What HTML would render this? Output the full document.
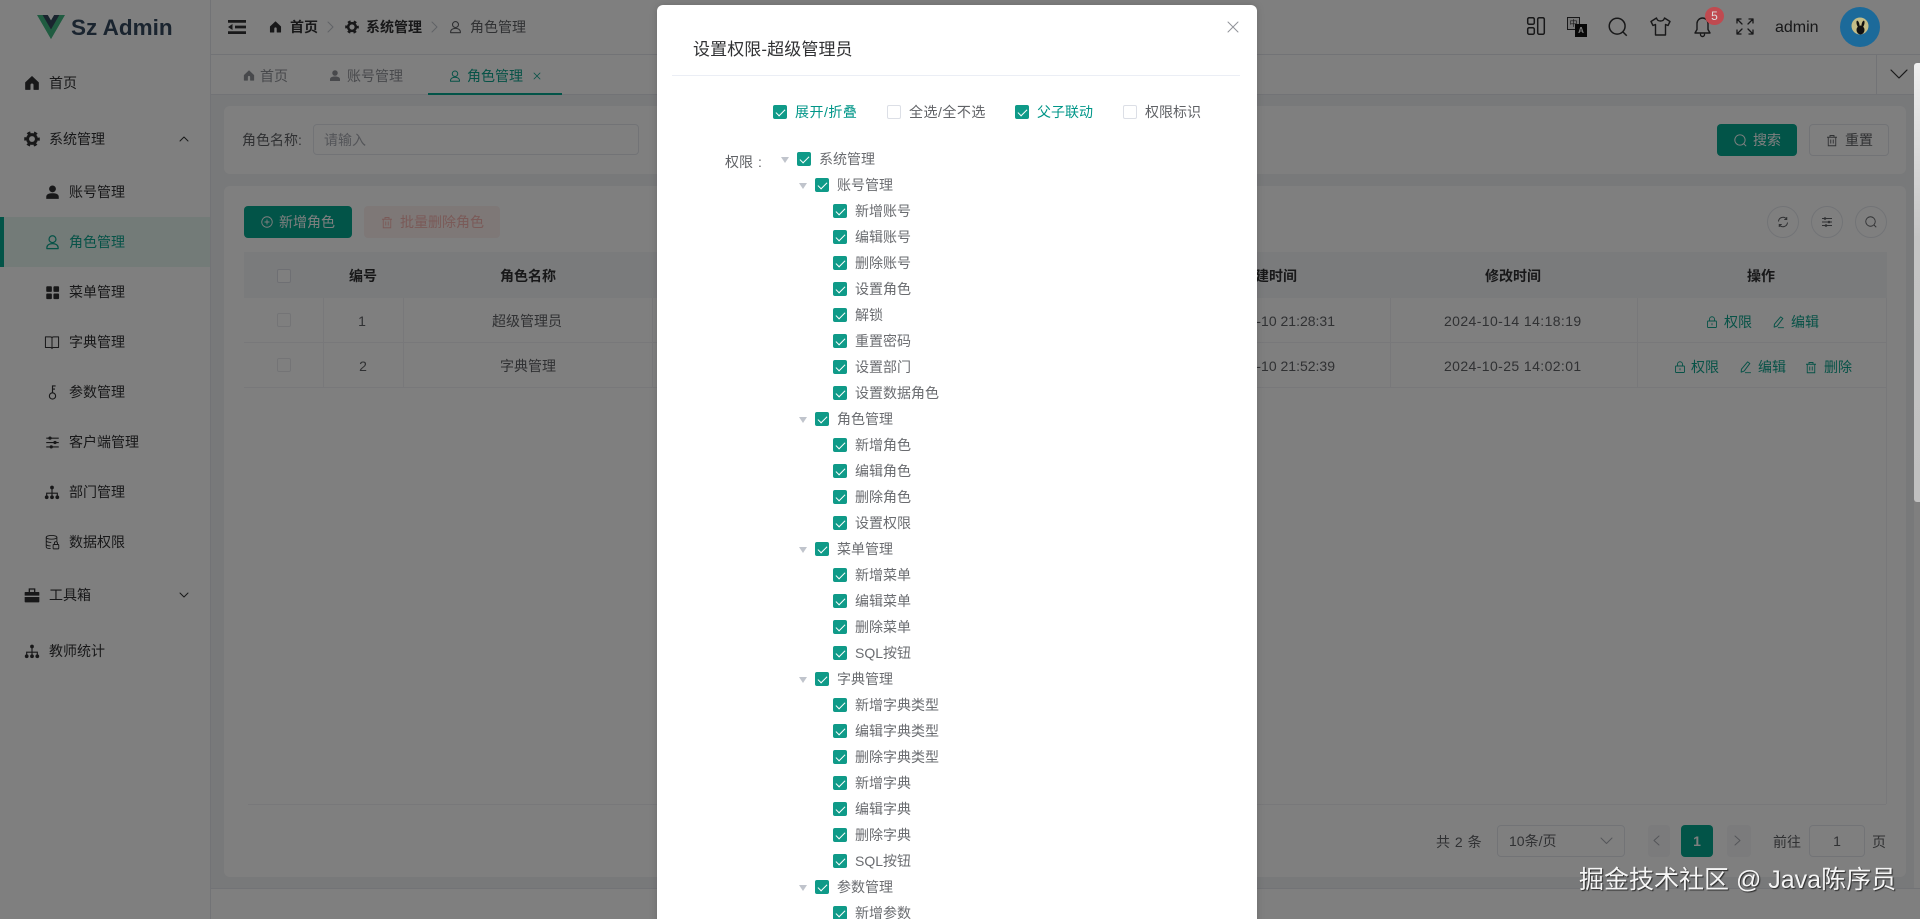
<!DOCTYPE html>
<html lang="zh-CN">
<head>
<meta charset="utf-8">
<title>Sz Admin</title>
<style>
*{box-sizing:border-box}
html,body{margin:0;padding:0;width:1920px;height:919px;overflow:hidden;background:#fff}
body{position:relative;font-family:"Liberation Sans","Noto Sans CJK SC",sans-serif;font-size:14px;color:#303133}
.a{position:absolute}
.t{position:absolute;white-space:nowrap;line-height:20px;height:20px}
.c{text-align:center;transform:translateX(-50%)}
svg.i{position:absolute;fill:none;stroke:currentColor;stroke-width:2;stroke-linecap:round;stroke-linejoin:round;overflow:visible}
.box{position:absolute;width:14px;height:14px;border:1px solid #dcdfe6;border-radius:2px;background:#fff}
.cb{position:absolute;width:14px;height:14px;border-radius:2px;background:#0f9a88}
.cb::after{content:"";position:absolute;left:5px;top:2px;width:4px;height:8px;border:solid #fff;border-width:0 1.4px 1.4px 0;transform:rotate(45deg)}
.g{color:#606266}
.teal{color:#0ea48e}
.btn{position:absolute;border-radius:4px}
.ln{position:absolute;background:#f0f1f5}
.r{position:relative;height:26px;line-height:26px;color:#6a6c70;white-space:nowrap}
.r .cb{top:6px}
.r span{position:absolute;top:0}
.r i{position:absolute;top:11px;width:0;height:0;border-left:4.5px solid transparent;border-right:4.5px solid transparent;border-top:6px solid #c0c4cc}
.l1 i{left:781px}.l1 .cb{left:797px}.l1 span{left:819px}
.l2 i{left:799px}.l2 .cb{left:815px}.l2 span{left:837px}
.l3 .cb{left:833px}.l3 span{left:855px}
</style>
</head>
<body>
<svg width="0" height="0" style="position:absolute">
<symbol id="home" viewBox="0 0 24 24"><path fill="currentColor" stroke="currentColor" stroke-width="1.5" stroke-linejoin="round" d="M12 2.500 2.500 11.500v10h6.500v-6.500a3 3 0 0 1 6 0v6.500h6.500v-10z"/></symbol>
<symbol id="gear" viewBox="0 0 24 24"><circle cx="12" cy="12" r="6.600" fill="none" stroke="currentColor" stroke-width="4.400"/><circle cx="12" cy="12" r="10" fill="none" stroke="currentColor" stroke-width="3.400" stroke-dasharray="5 5.470" stroke-dashoffset="2.500"/></symbol>
<symbol id="userf" viewBox="0 0 24 24"><circle cx="12" cy="7" r="5.500" fill="currentColor"/><path fill="currentColor" d="M2 23v-3.500C2 15.500 6.500 14 12 14s10 1.500 10 5.500V23z"/></symbol>
<symbol id="usero" viewBox="0 0 24 24"><circle cx="12" cy="7.500" r="5.500" fill="none" stroke="currentColor" stroke-width="2"/><path fill="none" stroke="currentColor" stroke-width="2" stroke-linejoin="round" d="M3 22.500v-1.500c0-4 4-6.500 9-6.500s9 2.500 9 6.500v1.500z"/></symbol>
<symbol id="grid" viewBox="0 0 24 24"><rect x="2" y="2" width="9" height="9" rx="1.500" fill="currentColor"/><rect x="13.500" y="2" width="9" height="9" rx="1.500" fill="currentColor"/><rect x="2" y="13.500" width="9" height="9" rx="1.500" fill="currentColor"/><rect x="13.500" y="13.500" width="9" height="9" rx="1.500" fill="currentColor"/></symbol>
<symbol id="book" viewBox="0 0 24 24"><path fill="none" stroke="currentColor" stroke-width="1.600" stroke-linejoin="round" d="M1.500 3h8c1.500 0 2.500.8 2.500 2 0-1.200 1-2 2.500-2h8v17h-8c-1.500 0-2.500.8-2.500 1.800 0-1-1-1.800-2.500-1.800h-8zM12 5v16.800"/></symbol>
<symbol id="key" viewBox="0 0 24 24"><circle cx="12" cy="17.500" r="5" fill="none" stroke="currentColor" stroke-width="1.800"/><path fill="none" stroke="currentColor" stroke-width="1.800" d="M12 12.500V1.500h5M12 6.500h4"/></symbol>
<symbol id="slide" viewBox="0 0 24 24"><path fill="none" stroke="currentColor" stroke-width="1.800" d="M2 5h20M2 12h20M2 19h20"/><circle cx="8" cy="5" r="2.600" fill="currentColor"/><circle cx="16" cy="12" r="2.600" fill="currentColor"/><circle cx="10" cy="19" r="2.600" fill="currentColor"/></symbol>
<symbol id="org" viewBox="0 0 24 24"><circle cx="12" cy="4" r="3" fill="currentColor"/><circle cx="3.500" cy="19.500" r="3" fill="currentColor"/><circle cx="12" cy="19.500" r="3" fill="currentColor"/><circle cx="20.500" cy="19.500" r="3" fill="currentColor"/><path fill="none" stroke="currentColor" stroke-width="1.800" d="M12 6v13M3.500 18v-5h17v5"/></symbol>
<symbol id="data" viewBox="0 0 24 24"><ellipse cx="10.500" cy="4.500" rx="8.500" ry="3" fill="none" stroke="currentColor" stroke-width="1.500"/><path fill="none" stroke="currentColor" stroke-width="1.500" d="M2 4.500V20c0 1.500 3 2.500 7 2.500M19 4.500V11M2 10c0 1.500 3.500 2.800 8 2.800M2 15.500c0 1.500 3 2.800 7 2.800"/><rect x="13" y="16" width="9" height="7" rx="1" fill="none" stroke="currentColor" stroke-width="1.500"/><path fill="none" stroke="currentColor" stroke-width="1.500" d="M15 16v-2a2.500 2.500 0 0 1 5 0v2"/></symbol>
<symbol id="case" viewBox="0 0 24 24"><path fill="currentColor" d="M2 7.500h20a1 1 0 0 1 1 1V13H1V8.500a1 1 0 0 1 1-1zM1 15h22v7a1 1 0 0 1-1 1H2a1 1 0 0 1-1-1z"/><path fill="none" stroke="currentColor" stroke-width="2" d="M8 7.500V3h8v4.500"/></symbol>
<symbol id="lock" viewBox="0 0 24 24"><rect x="3" y="10" width="18" height="13" rx="1.500" fill="none" stroke="currentColor" stroke-width="1.800"/><path fill="none" stroke="currentColor" stroke-width="1.800" d="M7 10V6.500a5 5 0 0 1 10 0V10M12 14.500v4"/></symbol>
<symbol id="edit" viewBox="0 0 24 24"><path fill="none" stroke="currentColor" stroke-width="1.800" stroke-linejoin="round" d="M16 2.500l4 3L9.500 19.500 4 21.500l.5-5.500zM11 22.500h11"/></symbol>
<symbol id="trash" viewBox="0 0 24 24"><path fill="none" stroke="currentColor" stroke-width="1.800" d="M2 5.500h20M8 5.500V2h8v3.500M4.500 5.500V22.500h15V5.500M9.500 10v8M14.500 10v8"/></symbol>
<symbol id="srch" viewBox="0 0 24 24"><circle cx="11" cy="11" r="9.500" fill="none" stroke="currentColor" stroke-width="1.800"/><path fill="none" stroke="currentColor" stroke-width="1.800" d="M18 18l4.500 4.500"/></symbol>
<symbol id="plus" viewBox="0 0 24 24"><circle cx="12" cy="12" r="10.500" fill="none" stroke="currentColor" stroke-width="1.800"/><path fill="none" stroke="currentColor" stroke-width="1.800" d="M12 7v10M7 12h10"/></symbol>
<symbol id="ref" viewBox="0 0 24 24"><path fill="none" stroke="currentColor" stroke-width="2" d="M3 11a9 9 0 0 1 16-5M21 13a9 9 0 0 1-16 5M19.500 2v5h-5M4.500 22v-5h5"/></symbol>
</svg>

<!-- sidebar -->
<div class="a" style="left:0;top:0;width:211px;height:919px;background:#fff;border-right:1px solid #e4e7ed"></div>
<svg class="a" style="left:37px;top:15px" width="28" height="24" viewBox="0 0 256 221"><path fill="#41b883" d="M204.800 0H256L128 220.800 0 0h97.920L128 51.200 157.440 0h47.360Z"/><path fill="#41b883" d="M0 0l128 220.800L256 0h-51.200L128 132.480 50.560 0H0z"/><path fill="#35495e" d="M50.560 0L128 133.120 204.800 0h-47.360L128 51.200 97.920 0H50.560z"/></svg>
<div class="t" style="left:71px;top:15px;font-size:22.500px;font-weight:700;line-height:25px;height:25px;color:#35495e">Sz Admin</div>

<div class="a" style="left:0;top:217px;width:210px;height:50px;background:#e6f7f1"></div>
<div class="a" style="left:0;top:217px;width:4px;height:50px;background:#04a890"></div>

<svg class="a" style="left:24px;top:75px;color:#303133" width="16" height="16"><use href="#home"/></svg><div class="t" style="left:49px;top:73px">首页</div>
<svg class="a" style="left:24px;top:131px;color:#303133" width="16" height="16"><use href="#gear"/></svg><div class="t" style="left:49px;top:129px">系统管理</div>
<svg class="i" style="left:180px;top:136px" width="8" height="5" viewBox="0 0 8 5"><path stroke-width="1" d="M0 5l4-4 4 4"/></svg>
<svg class="a" style="left:45px;top:184px;color:#303133" width="15" height="16"><use href="#userf"/></svg><div class="t" style="left:69px;top:182px">账号管理</div>
<svg class="a teal" style="left:45px;top:234px" width="15" height="16"><use href="#usero"/></svg><div class="t teal" style="left:69px;top:232px">角色管理</div>
<svg class="a" style="left:45px;top:285px;color:#303133" width="15" height="15"><use href="#grid"/></svg><div class="t" style="left:69px;top:282px">菜单管理</div>
<svg class="a" style="left:44px;top:335px;color:#303133" width="16" height="15"><use href="#book"/></svg><div class="t" style="left:69px;top:332px">字典管理</div>
<svg class="a" style="left:45px;top:384px;color:#303133" width="15" height="17"><use href="#key"/></svg><div class="t" style="left:69px;top:382px">参数管理</div>
<svg class="a" style="left:45px;top:435px;color:#303133" width="15" height="15"><use href="#slide"/></svg><div class="t" style="left:69px;top:432px">客户端管理</div>
<svg class="a" style="left:44px;top:485px;color:#303133" width="16" height="15"><use href="#org"/></svg><div class="t" style="left:69px;top:482px">部门管理</div>
<svg class="a" style="left:45px;top:534px;color:#303133" width="15" height="16"><use href="#data"/></svg><div class="t" style="left:69px;top:532px">数据权限</div>
<svg class="a" style="left:24px;top:587px;color:#303133" width="16" height="16"><use href="#case"/></svg><div class="t" style="left:49px;top:585px">工具箱</div>
<svg class="i" style="left:180px;top:593px" width="8" height="5" viewBox="0 0 8 5"><path stroke-width="1" d="M0 0l4 4 4-4"/></svg>
<svg class="a" style="left:24px;top:644px;color:#303133" width="16" height="15"><use href="#org"/></svg><div class="t" style="left:49px;top:641px">教师统计</div>

<!-- header -->
<div class="ln" style="left:211px;top:54px;width:1709px;height:1px;background:#e4e7ed"></div>
<svg class="a" style="left:228px;top:20px;color:#303133" width="18" height="14" viewBox="0 0 18 14"><path fill="currentColor" d="M0 0h18v2.800H0zM7 5.600h11v2.800H7zM0 11.200h18V14H0zM4.500 4v6L0 7z"/></svg>
<svg class="a" style="left:269px;top:20px;color:#303133" width="13" height="14"><use href="#home"/></svg><div class="t" style="left:290px;top:17px;font-weight:700">首页</div>
<svg class="i" style="left:328px;top:22px;color:#c0c4cc" width="6" height="10" viewBox="0 0 6 10"><path stroke-width="1" d="M0 0l5 5-5 5"/></svg>
<svg class="a" style="left:345px;top:20px;color:#303133" width="14" height="14"><use href="#gear"/></svg><div class="t" style="left:366px;top:17px;font-weight:700">系统管理</div>
<svg class="i" style="left:432px;top:22px;color:#c0c4cc" width="6" height="10" viewBox="0 0 6 10"><path stroke-width="1" d="M0 0l5 5-5 5"/></svg>
<svg class="a g" style="left:449px;top:20px" width="13" height="14"><use href="#usero"/></svg><div class="t g" style="left:470px;top:17px">角色管理</div>

<svg class="i" style="left:1527px;top:17px;color:#303133" width="18" height="18" viewBox="0 0 18 18"><rect stroke-width="1.500" x=".7" y=".7" width="6.600" height="6.600" rx="1.500"/><rect stroke-width="1.500" x=".7" y="10.700" width="6.600" height="6.600" rx="1.500"/><rect stroke-width="1.500" x="10.700" y=".7" width="6.600" height="16.600" rx="1.500"/></svg>
<div class="a" style="left:1567px;top:17px;width:13px;height:13px;border:1px solid #303133;background:#eee;font-size:8px;line-height:11px;text-align:center;color:#303133">中</div>
<div class="a" style="left:1575px;top:24px;width:12px;height:13px;background:#111;color:#fff;font-size:8px;line-height:13px;text-align:center;font-weight:700">A</div>
<svg class="a" style="left:1608px;top:17px;color:#303133" width="20" height="20"><use href="#srch"/></svg>
<svg class="i" style="left:1650px;top:17px;color:#303133" width="21" height="19" viewBox="0 0 21 19"><path stroke-width="1.400" d="M6.500 1 1 4.500l2 4 2.500-1V18h10V7.500l2.500 1 2-4L14.500 1c-.5 2-2 3-4 3s-3.500-1-4-3z"/></svg>
<svg class="i" style="left:1694px;top:16px;color:#303133" width="17" height="21" viewBox="0 0 17 21"><path stroke-width="1.400" d="M8.500 2a5.500 5.500 0 0 0-5.500 5.500v6L1 17h15l-2-3.500v-6A5.500 5.500 0 0 0 8.500 2zM6.500 18.500a2 2 0 0 0 4 0"/></svg>
<svg class="i" style="left:1736px;top:18px;color:#303133" width="18" height="17" viewBox="0 0 18 17"><path stroke-width="1.300" d="M1 5V1h4M1 1l5 5M13 1h4v4M17 1l-5 5M1 12v4h4M1 16l5-5M17 12v4h-4M17 16l-5-5"/></svg>
<div class="t" style="left:1775px;top:18px;font-size:16px;color:#303133">admin</div>

<!-- tabs -->
<div class="ln" style="left:211px;top:94px;width:1709px;height:1px;background:#e4e7ed"></div>
<svg class="a" style="left:243px;top:69px;color:#909399" width="12" height="13"><use href="#home"/></svg><div class="t" style="left:260px;top:66px;color:#909399">首页</div>
<svg class="a" style="left:329px;top:69px;color:#909399" width="12" height="13"><use href="#userf"/></svg><div class="t" style="left:347px;top:66px;color:#909399">账号管理</div>
<svg class="a teal" style="left:449px;top:69px" width="12" height="14"><use href="#usero"/></svg><div class="t teal" style="left:467px;top:66px">角色管理</div>
<svg class="i teal" style="left:534px;top:73px" width="6" height="6" viewBox="0 0 7 7"><path stroke-width="1" d="M0 0l7 7M7 0L0 7"/></svg>
<div class="a" style="left:428px;top:93px;width:134px;height:2px;background:#04a890"></div>
<div class="a" style="left:1876px;top:55px;width:1px;height:40px;background:#e4e7ed"></div>
<svg class="i" style="left:1891px;top:70px;color:#303133" width="16" height="9" viewBox="0 0 16 9"><path stroke-width="1.200" d="M0 0l8 8 8-8"/></svg>

<!-- main bg -->
<div class="a" style="left:211px;top:95px;width:1703px;height:793px;background:#f0f2f5"></div>
<div class="ln" style="left:211px;top:888px;width:1709px;height:1px;background:#e4e7ed"></div>

<!-- search card -->
<div class="a" style="left:224px;top:106px;width:1682px;height:68px;background:#fff;border-radius:6px"></div>
<div class="t g" style="left:242px;top:130px">角色名称:</div>
<div class="a" style="left:313px;top:124px;width:326px;height:31px;border:1px solid #e4e7ed;border-radius:4px"></div>
<div class="t" style="left:324px;top:130px;color:#a8abb2">请输入</div>
<div class="btn" style="left:1717px;top:124px;width:80px;height:32px;background:#04a890"></div>
<svg class="a" style="left:1734px;top:134px;color:#fff" width="13" height="13"><use href="#srch"/></svg><div class="t" style="left:1753px;top:130px;color:#fff">搜索</div>
<div class="btn" style="left:1809px;top:124px;width:80px;height:32px;border:1px solid #e4e7ed"></div>
<svg class="a g" style="left:1826px;top:134px" width="12" height="13"><use href="#trash"/></svg><div class="t g" style="left:1845px;top:130px">重置</div>

<!-- table card -->
<div class="a" style="left:224px;top:186px;width:1682px;height:691px;background:#fff;border-radius:6px"></div>
<div class="btn" style="left:244px;top:206px;width:108px;height:32px;background:#04a890"></div>
<svg class="a" style="left:261px;top:216px;color:#fff" width="12" height="12"><use href="#plus"/></svg><div class="t" style="left:279px;top:212px;color:#fff">新增角色</div>
<div class="btn" style="left:364px;top:206px;width:136px;height:32px;background:#fdf0ee"></div>
<svg class="a" style="left:381px;top:216px;color:#f5b5b0" width="12" height="13"><use href="#trash"/></svg><div class="t" style="left:400px;top:212px;color:#f5b5b0">批量删除角色</div>

<div class="a" style="left:1767px;top:206px;width:32px;height:32px;border:1px solid #e4e7ed;border-radius:50%"></div>
<svg class="a g" style="left:1777px;top:216px" width="12" height="12"><use href="#ref"/></svg>
<div class="a" style="left:1811px;top:206px;width:32px;height:32px;border:1px solid #e4e7ed;border-radius:50%"></div>
<svg class="a g" style="left:1821px;top:216px" width="12" height="12"><use href="#slide"/></svg>
<div class="a" style="left:1855px;top:206px;width:32px;height:32px;border:1px solid #e4e7ed;border-radius:50%"></div>
<svg class="a g" style="left:1865px;top:216px" width="12" height="12"><use href="#srch"/></svg>

<div class="a" style="left:244px;top:252px;width:1643px;height:46px;background:#f5f6f8"></div>
<div class="ln" style="left:244px;top:342px;width:1642px;height:1px"></div>
<div class="ln" style="left:244px;top:387px;width:1642px;height:1px"></div>
<div class="ln" style="left:323px;top:298px;width:1px;height:89px"></div>
<div class="ln" style="left:403px;top:298px;width:1px;height:89px"></div>
<div class="ln" style="left:652px;top:298px;width:1px;height:89px"></div>
<div class="ln" style="left:1390px;top:298px;width:1px;height:89px"></div>
<div class="ln" style="left:1637px;top:298px;width:1px;height:89px"></div>
<div class="ln" style="left:1886px;top:298px;width:1px;height:506px"></div>
<div class="ln" style="left:248px;top:804px;width:1638px;height:1px"></div>

<div class="box" style="left:277px;top:269px"></div>
<div class="box" style="left:277px;top:313px;border-color:#e8e9ed"></div>
<div class="box" style="left:277px;top:358px;border-color:#e8e9ed"></div>
<div class="t c" style="left:363px;top:266px;font-weight:700">编号</div>
<div class="t c" style="left:528px;top:266px;font-weight:700">角色名称</div>
<div class="t c" style="left:1269px;top:266px;font-weight:700">创建时间</div>
<div class="t c" style="left:1513px;top:266px;font-weight:700">修改时间</div>
<div class="t c" style="left:1761px;top:266px;font-weight:700">操作</div>

<div class="t c g" style="left:362px;top:311px">1</div>
<div class="t c g" style="left:527px;top:311px">超级管理员</div>
<div class="t g" style="left:1205px;top:311px">2024-10-10 21:28:31</div>
<div class="t g" style="left:1444px;top:311px;letter-spacing:.4px">2024-10-14 14:18:19</div>
<div class="t c g" style="left:363px;top:356px">2</div>
<div class="t c g" style="left:528px;top:356px">字典管理</div>
<div class="t g" style="left:1205px;top:356px">2024-10-10 21:52:39</div>
<div class="t g" style="left:1444px;top:356px;letter-spacing:.4px">2024-10-25 14:02:01</div>

<svg class="a teal" style="left:1706px;top:315px" width="12" height="14"><use href="#lock"/></svg><div class="t teal" style="left:1724px;top:312px">权限</div>
<svg class="a teal" style="left:1772px;top:315px" width="13" height="14"><use href="#edit"/></svg><div class="t teal" style="left:1791px;top:312px">编辑</div>
<svg class="a teal" style="left:1674px;top:360px" width="12" height="14"><use href="#lock"/></svg><div class="t teal" style="left:1691px;top:357px">权限</div>
<svg class="a teal" style="left:1739px;top:360px" width="13" height="14"><use href="#edit"/></svg><div class="t teal" style="left:1758px;top:357px">编辑</div>
<svg class="a teal" style="left:1805px;top:361px" width="12" height="13"><use href="#trash"/></svg><div class="t teal" style="left:1824px;top:357px">删除</div>

<!-- pagination -->
<div class="t g" style="left:1436px;top:832px;word-spacing:1px">共 2 条</div>
<div class="a" style="left:1497px;top:825px;width:128px;height:32px;border:1px solid #e4e7ed;border-radius:4px"></div>
<div class="t g" style="left:1509px;top:831px">10条/页</div>
<svg class="i" style="left:1601px;top:838px;color:#a8abb2" width="11" height="6" viewBox="0 0 11 6"><path stroke-width="1" d="M0 0l5.500 5.500L11 0"/></svg>
<div class="btn" style="left:1648px;top:825px;width:22px;height:32px;background:#f7f7f8"></div>
<svg class="i" style="left:1654px;top:836px;color:#a8abb2" width="5" height="9" viewBox="0 0 5 9"><path stroke-width="1" d="M5 0L0 4.500 5 9"/></svg>
<div class="btn" style="left:1681px;top:825px;width:32px;height:32px;background:#04a890;color:#fff;text-align:center;line-height:32px;font-weight:700">1</div>
<div class="btn" style="left:1727px;top:825px;width:24px;height:32px;background:#f7f7f8"></div>
<svg class="i" style="left:1735px;top:836px;color:#a8abb2" width="5" height="9" viewBox="0 0 5 9"><path stroke-width="1" d="M0 0l5 4.500L0 9"/></svg>
<div class="t g" style="left:1773px;top:832px">前往</div>
<div class="a" style="left:1809px;top:825px;width:56px;height:32px;border:1px solid #e4e7ed;border-radius:4px"></div>
<div class="t c g" style="left:1837px;top:831px">1</div>
<div class="t g" style="left:1872px;top:832px">页</div>

<!-- overlay -->
<div class="a" style="left:0;top:0;width:1920px;height:919px;background:rgba(0,0,0,.5)"></div>

<!-- above overlay -->
<svg class="a" style="left:1840px;top:7px" width="40" height="40" viewBox="0 0 40 40"><circle cx="20" cy="20" r="20" fill="#1c6a9a"/><circle cx="20" cy="19" r="8.500" fill="#c4bd88"/><ellipse cx="20.500" cy="23" rx="4" ry="4.500" fill="#111"/><ellipse cx="18" cy="17" rx="1.300" ry="3.500" fill="#111" transform="rotate(-15 18 17)"/><ellipse cx="23" cy="17" rx="1.300" ry="3.500" fill="#111" transform="rotate(15 23 17)"/></svg>
<div class="a" style="left:1705px;top:7px;width:19px;height:18px;border-radius:50%;background:#c04a50;color:#ddd;font-size:12px;line-height:18px;text-align:center">5</div>
<div class="a" style="left:1914px;top:63px;width:6px;height:439px;border-radius:3px 0 0 3px;background:linear-gradient(#f0f0f0,#c4c4c4 40%,#c0c0c0)"></div>

<!-- modal -->
<div class="a" style="left:657px;top:5px;width:600px;height:930px;background:#fff;border-radius:6px;box-shadow:0 0 8px rgba(0,0,0,.15)"></div>
<svg class="i" style="left:1228px;top:22px;color:#909399" width="10" height="10" viewBox="0 0 10 10"><path stroke-width="1" d="M0 0l10 10M10 0L0 10"/></svg>
<div class="t" style="left:693px;top:39px;font-size:17px;line-height:22px;height:22px;color:#303133;letter-spacing:.1px">设置权限-超级管理员</div>
<div class="a" style="left:672px;top:75px;width:568px;height:1px;background:#ebeef5"></div>

<div class="cb" style="left:773px;top:105px"></div><div class="t" style="left:795px;top:102px;color:#009688;letter-spacing:.5px">展开/折叠</div>
<div class="box" style="left:887px;top:105px"></div><div class="t g" style="left:909px;top:102px;letter-spacing:.5px">全选/全不选</div>
<div class="cb" style="left:1015px;top:105px"></div><div class="t" style="left:1037px;top:102px;color:#009688">父子联动</div>
<div class="box" style="left:1123px;top:105px"></div><div class="t g" style="left:1145px;top:102px">权限标识</div>

<div class="t g" style="left:725px;top:152px">权限</div><div class="t g" style="left:758px;top:152px">:</div>

<div class="a" style="left:0;top:146.300px;width:1257px;height:773px;overflow:hidden">
<div class="r l1"><i></i><b class="cb"></b><span>系统管理</span></div>
<div class="r l2"><i></i><b class="cb"></b><span>账号管理</span></div>
<div class="r l3"><b class="cb"></b><span>新增账号</span></div>
<div class="r l3"><b class="cb"></b><span>编辑账号</span></div>
<div class="r l3"><b class="cb"></b><span>删除账号</span></div>
<div class="r l3"><b class="cb"></b><span>设置角色</span></div>
<div class="r l3"><b class="cb"></b><span>解锁</span></div>
<div class="r l3"><b class="cb"></b><span>重置密码</span></div>
<div class="r l3"><b class="cb"></b><span>设置部门</span></div>
<div class="r l3"><b class="cb"></b><span>设置数据角色</span></div>
<div class="r l2"><i></i><b class="cb"></b><span>角色管理</span></div>
<div class="r l3"><b class="cb"></b><span>新增角色</span></div>
<div class="r l3"><b class="cb"></b><span>编辑角色</span></div>
<div class="r l3"><b class="cb"></b><span>删除角色</span></div>
<div class="r l3"><b class="cb"></b><span>设置权限</span></div>
<div class="r l2"><i></i><b class="cb"></b><span>菜单管理</span></div>
<div class="r l3"><b class="cb"></b><span>新增菜单</span></div>
<div class="r l3"><b class="cb"></b><span>编辑菜单</span></div>
<div class="r l3"><b class="cb"></b><span>删除菜单</span></div>
<div class="r l3"><b class="cb"></b><span>SQL按钮</span></div>
<div class="r l2"><i></i><b class="cb"></b><span>字典管理</span></div>
<div class="r l3"><b class="cb"></b><span>新增字典类型</span></div>
<div class="r l3"><b class="cb"></b><span>编辑字典类型</span></div>
<div class="r l3"><b class="cb"></b><span>删除字典类型</span></div>
<div class="r l3"><b class="cb"></b><span>新增字典</span></div>
<div class="r l3"><b class="cb"></b><span>编辑字典</span></div>
<div class="r l3"><b class="cb"></b><span>删除字典</span></div>
<div class="r l3"><b class="cb"></b><span>SQL按钮</span></div>
<div class="r l2"><i></i><b class="cb"></b><span>参数管理</span></div>
<div class="r l3"><b class="cb"></b><span>新增参数</span></div>
</div>

<!-- watermark -->
<div class="t" style="left:1579px;top:865px;height:30px;line-height:30px;font-size:25px;color:#f5f5f5;text-shadow:1px 1px 1px #2a2a2a">掘金技术社区 @ Java陈序员</div>
</body>
</html>
